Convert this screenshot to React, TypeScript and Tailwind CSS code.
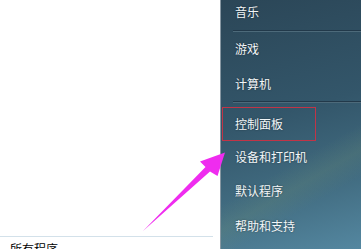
export default function App() {
  const items = ["设备和打印机", "默认程序", "帮助和支持"];
  return (
    <div
      className="relative flex h-[249px] w-[361px] overflow-hidden bg-white"
      style={{ fontFamily: '"Noto Sans CJK SC", "Noto Sans", sans-serif' }}
    >
      {/* left white pane of the start menu */}
      <div className="flex w-[220px] flex-col justify-end bg-white">
        <div className="mr-[7px] h-px bg-[#d3e1ea]" />
        <div className="h-[12px] pl-[10px] pt-[4px] text-[12px] leading-[16px] text-black">所有程序</div>
      </div>

      {/* right dark pane */}
      <div className="relative flex-1 border-l border-[#8797a2] bg-[linear-gradient(165deg,#2b4657_0%,#33566a_45%,#426d82_75%,#5487a0_100%)] text-[12px] leading-none text-[#f2f6f8] [text-shadow:0_0_2px_rgba(0,0,0,0.45)]">
        <div className="pointer-events-none absolute inset-0 bg-[linear-gradient(150deg,transparent_62%,rgba(120,150,110,0.18)_70%,transparent_78%)]" />
        <div className="relative flex flex-col">
          <div className="flex h-[23px] items-center pl-[14px]">音乐</div>
          <div className="ml-[12px] mt-[7px] h-px bg-[#22394a] shadow-[0_1px_0_#4d6a7a]" />
          <div className="flex h-[35px] items-center pl-[14px]">游戏</div>
          <div className="flex h-[35px] items-center pl-[14px]">计算机</div>
          <div className="ml-[12px] h-px bg-[#22394a] shadow-[0_1px_0_#4d6a7a]" />
          <div className="ml-px mt-[5px] flex h-[34px] w-[94px] items-center border border-[#c13447] pl-[12px]">
            控制面板
          </div>
          <div className="flex h-[32px] items-center pl-[14px]">{items[0]}</div>
          <div className="flex h-[35px] items-center pl-[14px]">{items[1]}</div>
          <div className="flex h-[35px] items-center pl-[14px]">{items[2]}</div>
        </div>
      </div>

      {/* annotation arrow */}
      <svg className="pointer-events-none absolute left-0 top-0" width="361" height="249" viewBox="0 0 361 249">
        <polygon
          points="143,231 205.5,167 200,161.5 225,152.5 217.5,176 210,171.5"
          fill="#ef2cef"
        />
      </svg>
    </div>
  );
}
